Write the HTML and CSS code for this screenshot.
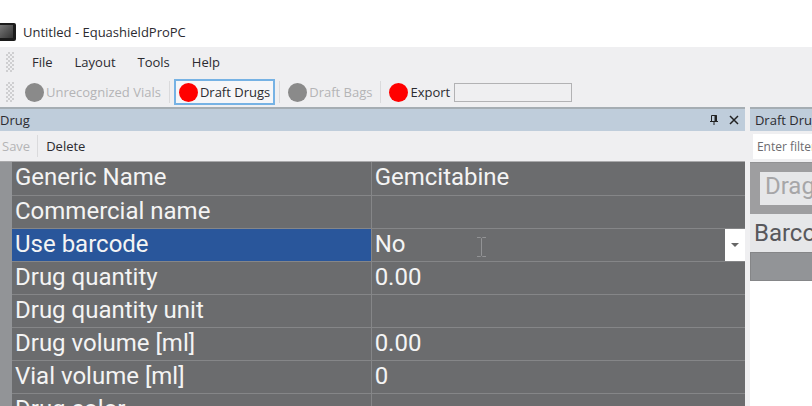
FILE: index.html
```
<!DOCTYPE html>
<html lang="en">
<head>
  <meta charset="utf-8">
  <title>Untitled - EquashieldProPC</title>
  <link rel="stylesheet" href="styles.css">
</head>
<body>

  <header class="titlebar">
    <svg class="app-icon" width="16" height="18" viewBox="0 0 16 18">
      <defs>
        <linearGradient id="metal" x1="0" y1="0" x2="1" y2="1">
          <stop offset="0" stop-color="#777"/>
          <stop offset="1" stop-color="#333"/>
        </linearGradient>
      </defs>
      <rect x="-3" y="0" width="19" height="18" rx="2" fill="#1b1b1b"/>
      <rect x="0" y="2" width="13" height="13" fill="url(#metal)"/>
    </svg>
    <h1>Untitled - EquashieldProPC</h1>
  </header>

  <nav class="menubar">
    <span class="grip"></span>
    <button class="menu">File</button>
    <button class="menu">Layout</button>
    <button class="menu">Tools</button>
    <button class="menu">Help</button>
  </nav>

  <div class="toolbar">
    <span class="grip"></span>
    <button class="tool" disabled><span class="dot"></span>Unrecognized Vials</button>
    <span class="separator"></span>
    <button class="tool active"><span class="dot"></span>Draft Drugs</button>
    <span class="separator"></span>
    <button class="tool" disabled><span class="dot"></span>Draft Bags</button>
    <span class="separator"></span>
    <button class="tool"><span class="dot"></span>Export</button>
    <input class="progress" type="text" aria-label="Export status" readonly>
  </div>

  <main class="docks">
    <section class="pane">
      <div class="caption">
        <h2>Drug</h2>
        <button class="caption-button" aria-label="Pin">
          <svg width="10" height="12" viewBox="0 0 10 12" fill="none" stroke="#222">
            <path d="M2.5 7V1.5h5V7M1 7.5h8M5 8v3"/>
            <path d="M6.5 1v6" stroke-width="2"/>
          </svg>
        </button>
        <button class="caption-button" aria-label="Close">
          <svg width="10" height="10" viewBox="0 0 10 10" stroke="#222" stroke-width="1.5">
            <path d="M1 1l8 8M9 1L1 9"/>
          </svg>
        </button>
      </div>
      <div class="actions">
        <button class="action" disabled>Save</button>
        <span class="separator"></span>
        <button class="action">Delete</button>
      </div>
      <div class="properties">
        <table>
          <tr><th scope="row">Generic Name</th><td>Gemcitabine</td></tr>
          <tr><th scope="row">Commercial name</th><td></td></tr>
          <tr class="selected">
            <th scope="row"><label for="use-barcode">Use barcode</label></th>
            <td>
              <div class="editor">
                <select id="use-barcode"><option>No</option><option>Yes</option></select>
                <span class="drop"><svg width="8" height="4" viewBox="0 0 8 4"><path d="M0 0h8L4 4z" fill="#666"/></svg></span>
                <svg class="caret" width="9" height="20" viewBox="0 0 9 20" fill="none" stroke="#929395">
                  <path d="M0 .5h3.500l1 1 1-1H9M4.500 1.500v17M0 19.500h3.500l1-1 1 1H9"/>
                </svg>
              </div>
            </td>
          </tr>
          <tr><th scope="row">Drug quantity</th><td>0.00</td></tr>
          <tr><th scope="row">Drug quantity unit</th><td></td></tr>
          <tr><th scope="row">Drug volume [ml]</th><td>0.00</td></tr>
          <tr><th scope="row">Vial volume [ml]</th><td>0</td></tr>
          <tr><th scope="row">Drug color</th><td></td></tr>
        </table>
      </div>
    </section>

    <section class="pane drafts">
      <div class="caption"><h2>Draft Drugs</h2></div>
      <div class="filter">
        <input type="text" placeholder="Enter filter text" aria-label="Filter">
      </div>
      <div class="group-panel"><div class="group-hint">Drag a column header here</div></div>
      <div class="column-header">Barcode</div>
      <div class="empty-row"></div>
    </section>
  </main>

</body>
</html>
```
FILE: styles.css
```
* { box-sizing: border-box; }

body {
  margin: 0;
  height: 100vh;
  display: flex;
  flex-direction: column;
  overflow: hidden;
  background: #efeff1;
  color: #2b2b30;
  font: 13px/18px "Open Sans", "Noto Sans", sans-serif;
}

button, input, select {
  font: inherit;
  color: inherit;
  border: 0;
  padding: 0;
  margin: 0;
  background: none;
}

button:disabled { color: #b4b4b6; }

h1, h2 {
  margin: 0;
  font-size: 13px;
  font-weight: 400;
}

.titlebar {
  display: flex;
  align-items: center;
  gap: 7px;
  height: 47px;
  padding-top: 17px;
  background: #fff;
}

.menubar, .toolbar {
  display: flex;
  align-items: center;
  height: 30px;
  padding-left: 6px;
}

.grip {
  width: 8px;
  height: 20px;
  background: conic-gradient(#cfcfd1 25%, transparent 0 50%, #cfcfd1 0 75%, transparent 0) 0 0 / 4px 4px;
}

.menu { margin-left: 18px; }
.menu + .menu { margin-left: 22px; }

.tool {
  display: flex;
  align-items: center;
  gap: 2px;
  height: 26px;
  padding: 0 3px;
  border: 1px solid transparent;
  white-space: nowrap;
}

.grip + .tool { margin-left: 7px; }

.tool.active {
  border: 2px solid #76b2e4;
  background: #f6f6f8;
}

.dot {
  width: 19px;
  height: 19px;
  border-radius: 50%;
  background: #f00;
}

.tool:disabled .dot { background: #8a8a8a; }

.separator {
  width: 1px;
  height: 22px;
  margin: 0 4px;
  background: #dadadc;
}

.progress {
  width: 118px;
  height: 19px;
  border: 1px solid #b2b2b4;
}

.docks {
  flex: 1;
  min-height: 0;
  display: grid;
  grid-template-columns: 12fr 1fr;
  gap: 5px;
}

.pane {
  min-width: 0;
  overflow: hidden;
}

.caption {
  display: flex;
  align-items: center;
  gap: 10px;
  height: 24px;
  padding-right: 6px;
  border-top: 2px solid #a5adb3;
  background: #bfcddb;
  white-space: nowrap;
}

.caption h2 { flex: 1; }

.caption-button {
  display: flex;
}

.actions {
  display: flex;
  align-items: center;
  height: 30px;
  padding-left: 2px;
}

.actions .separator { margin: 0 8px 0 7px; }

.properties {
  padding-left: 12px;
  border-top: 1px solid #a9a9ab;
  background: #929497;
}

table {
  width: 100%;
  table-layout: fixed;
  border-collapse: collapse;
  background: #6b6c6e;
  color: #f4f4f4;
  font: 24px/30px Roboto, sans-serif;
}

th, td {
  height: 33px;
  padding: 0 0 0 3px;
  border-bottom: 1px solid #858688;
  font-weight: 400;
  text-align: left;
  vertical-align: top;
  white-space: nowrap;
}

th {
  width: 49%;
  border-right: 1px solid #858688;
}

.selected th { background: #29569b; }

.editor {
  position: relative;
  display: flex;
}

.editor select {
  flex: 1;
  height: 32px;
  padding-bottom: 2px;
  appearance: none;
}

.drop {
  display: flex;
  align-items: center;
  justify-content: center;
  width: 20px;
  background: #fff;
}

.caret {
  position: absolute;
  left: 102px;
  top: 8px;
}

.drafts {
  background: #fff;
}

.drafts .caption { padding-left: 5px; }

.filter {
  height: 31px;
  padding: 3px 0 3px 3px;
  background: #efeff1;
}

.filter input {
  width: 100%;
  height: 25px;
  padding-left: 4px;
  background: #fff;
  font-size: 12px;
}

.filter input::placeholder { color: #6c6c70; }

.group-panel {
  padding: 9px 0 9px 10px;
  border-top: 1px solid #929294;
  background: #9e9ea0;
}

.group-hint {
  height: 33px;
  padding-left: 5px;
  overflow: hidden;
  background: #e6e7e9;
  color: #a6a6a8;
  font: 24px/28px Roboto, sans-serif;
  white-space: nowrap;
}

.column-header {
  height: 38px;
  padding-left: 4px;
  background: #e6e7e9;
  color: #58585c;
  font: 24px/38px Roboto, sans-serif;
}

.empty-row {
  height: 29px;
  border: 1px solid #858688;
  border-right: 0;
  background: #929497;
}
```
